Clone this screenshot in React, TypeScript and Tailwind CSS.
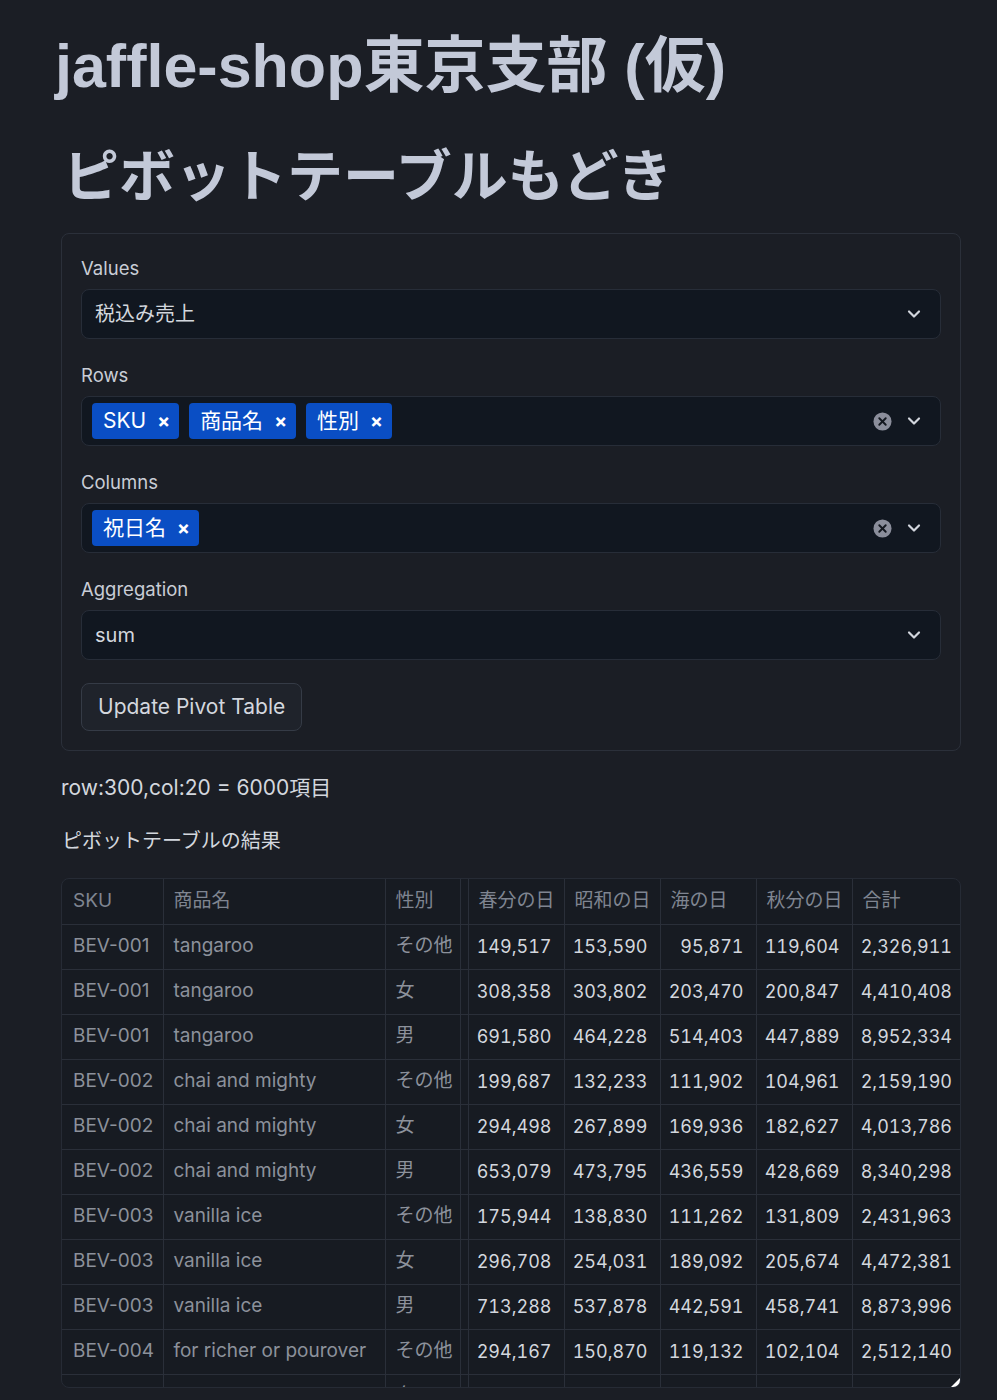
import React from 'react';
import { ChevronDown } from 'lucide-react';

const font = { fontFamily: 'Inter, "Noto Sans CJK JP", sans-serif' };
const headFont = { fontFamily: '"Liberation Sans", "Noto Sans CJK JP", sans-serif' };

type Row = {
  sku: string;
  name: string;
  gender: string;
  values: string[];
};

const rows: Row[] = [
  { sku: 'BEV-001', name: 'tangaroo', gender: 'その他', values: ['149,517', '153,590', '95,871', '119,604', '2,326,911'] },
  { sku: 'BEV-001', name: 'tangaroo', gender: '女', values: ['308,358', '303,802', '203,470', '200,847', '4,410,408'] },
  { sku: 'BEV-001', name: 'tangaroo', gender: '男', values: ['691,580', '464,228', '514,403', '447,889', '8,952,334'] },
  { sku: 'BEV-002', name: 'chai and mighty', gender: 'その他', values: ['199,687', '132,233', '111,902', '104,961', '2,159,190'] },
  { sku: 'BEV-002', name: 'chai and mighty', gender: '女', values: ['294,498', '267,899', '169,936', '182,627', '4,013,786'] },
  { sku: 'BEV-002', name: 'chai and mighty', gender: '男', values: ['653,079', '473,795', '436,559', '428,669', '8,340,298'] },
  { sku: 'BEV-003', name: 'vanilla ice', gender: 'その他', values: ['175,944', '138,830', '111,262', '131,809', '2,431,963'] },
  { sku: 'BEV-003', name: 'vanilla ice', gender: '女', values: ['296,708', '254,031', '189,092', '205,674', '4,472,381'] },
  { sku: 'BEV-003', name: 'vanilla ice', gender: '男', values: ['713,288', '537,878', '442,591', '458,741', '8,873,996'] },
  { sku: 'BEV-004', name: 'for richer or pourover', gender: 'その他', values: ['294,167', '150,870', '119,132', '102,104', '2,512,140'] },
  { sku: 'BEV-004', name: 'for richer or pourover', gender: '女', values: ['285,523', '255,936', '203,078', '207,091', '4,645,601'] },
];

const valueHeaders = ['春分の日', '昭和の日', '海の日', '秋分の日', '合計'];

const ClearIcon = () => (
  <svg width="19" height="19" viewBox="0 0 20 20">
    <circle cx="10" cy="10" r="9.5" fill="#8b8e9b" />
    <path d="M6.6 6.6 L13.4 13.4 M13.4 6.6 L6.6 13.4" stroke="#14181f" strokeWidth="2" strokeLinecap="round" />
  </svg>
);

const Tag = ({ label }: { label: string }) => (
  <span className="flex h-[36px] items-center gap-[11px] rounded-[4px] bg-[#0a4ec4] pl-[11px] pr-[9px] text-[21px] text-white">
    <span>{label}</span>
    <span className="text-[19px] font-bold leading-none">×</span>
  </span>
);

const Field = ({ label, children }: { label: string; children: React.ReactNode }) => (
  <div>
    <div className="mb-[8px] text-[18.5px] leading-[26px] text-[#c9cdd6]">{label}</div>
    {children}
  </div>
);

const SingleSelect = ({ value }: { value: string }) => (
  <div className="flex h-[50px] items-center justify-between rounded-[8px] border border-[#272d38] bg-[#111720] pl-[13px] pr-[16px] text-[20px] text-[#d3d7de]">
    <span>{value}</span>
    <ChevronDown size={20} strokeWidth={2.6} className="text-[#d3d7de]" />
  </div>
);

const MultiSelect = ({ values }: { values: string[] }) => (
  <div className="flex h-[50px] items-center justify-between rounded-[8px] border border-[#272d38] bg-[#111720] pl-[10px] pr-[16px]">
    <div className="flex gap-[10px]">
      {values.map((v) => (
        <Tag key={v} label={v} />
      ))}
    </div>
    <div className="flex items-center gap-[12px]">
      <ClearIcon />
      <ChevronDown size={20} strokeWidth={2.6} className="text-[#d3d7de]" />
    </div>
  </div>
);

export default function App() {
  return (
    <div className="min-h-[1400px] bg-[#1b1e25] pl-[61px] pt-[26px]" style={font}>
      <div className="w-[900px]">
        <h1 className="ml-[-6px] text-[61px] font-bold leading-[80px] text-[#c3c9d8]" style={headFont}>
          jaffle-shop東京支部 (仮)
        </h1>
        <h2 className="mt-[38px] ml-[2px] text-[56px] font-bold leading-[66px] text-[#c3c9d8]" style={headFont}>
          ピボットテーブルもどき
        </h2>

        <div className="mt-[23px] flex flex-col gap-[23px] rounded-[8px] border border-[#2b303a] px-[19px] pt-[21px] pb-[19px]">
          <Field label="Values">
            <SingleSelect value="税込み売上" />
          </Field>
          <Field label="Rows">
            <MultiSelect values={['SKU', '商品名', '性別']} />
          </Field>
          <Field label="Columns">
            <MultiSelect values={['祝日名']} />
          </Field>
          <Field label="Aggregation">
            <SingleSelect value="sum" />
          </Field>
          <div>
            <button className="h-[48px] rounded-[8px] border border-[#353b46] bg-[#1f232b] px-[16px] text-[21px] text-[#d3d7de]">
              Update Pivot Table
            </button>
          </div>
        </div>

        <p className="mt-[22px] text-[21px] leading-[30px] text-[#d3d7de]">row:300,col:20 = 6000項目</p>
        <p className="mt-[23px] ml-[1px] text-[20px] leading-[30px] text-[#d3d7de]">ピボットテーブルの結果</p>

        <div className="relative mt-[22px] h-[510px] overflow-hidden rounded-[8px] border border-[#262b35] bg-[#171b22]">
          <table className="w-[900px] table-fixed border-collapse text-[19px]">
            <colgroup>
              <col className="w-[101px]" />
              <col className="w-[222px]" />
              <col className="w-[75px]" />
              <col className="w-[8px]" />
              <col className="w-[96px]" />
              <col className="w-[96px]" />
              <col className="w-[96px]" />
              <col className="w-[96px]" />
              <col className="w-[110px]" />
            </colgroup>
            <thead>
              <tr className="h-[45px] text-left text-[#7f8591]">
                <th className="border-r border-b border-[#2a2f39] pl-[11px] font-normal">SKU</th>
                <th className="border-r border-b border-[#2a2f39] pl-[10px] font-normal">商品名</th>
                <th className="border-r border-b border-[#2a2f39] pl-[10px] font-normal">性別</th>
                <th className="border-r border-b border-[#2a2f39]" />
                {valueHeaders.map((h, i) => (
                  <th
                    key={h}
                    className={
                      i === valueHeaders.length - 1
                        ? 'border-b border-[#2a2f39] pl-[10px] font-normal'
                        : 'border-r border-b border-[#2a2f39] pl-[10px] font-normal'
                    }
                  >
                    {h}
                  </th>
                ))}
              </tr>
            </thead>
            <tbody>
              {rows.map((r, idx) => (
                <tr key={idx} className="h-[45px]">
                  <td className="border-r border-b border-[#2a2f39] pl-[11px] text-[#8c919b]">{r.sku}</td>
                  <td className="border-r border-b border-[#2a2f39] pl-[10px] text-[#8c919b]">{r.name}</td>
                  <td className="border-r border-b border-[#2a2f39] pl-[10px] text-[#8c919b]">{r.gender}</td>
                  <td className="border-r border-b border-[#2a2f39]" />
                  {r.values.map((v, i) => (
                    <td
                      key={i}
                      className={
                        i === r.values.length - 1
                          ? 'border-b border-[#2a2f39] pr-[10px] text-right text-[18px] tabular-nums text-[#d3d7de]'
                          : 'border-r border-b border-[#2a2f39] pr-[12px] text-right text-[18px] tabular-nums text-[#d3d7de]'
                      }
                    >
                      {v}
                    </td>
                  ))}
                </tr>
              ))}
            </tbody>
          </table>
          <div className="absolute right-0 bottom-0 h-0 w-0 border-t-[9px] border-l-[9px] border-t-transparent border-l-transparent border-b-0 border-r-[9px] border-r-white" />
        </div>
      </div>
    </div>
  );
}
